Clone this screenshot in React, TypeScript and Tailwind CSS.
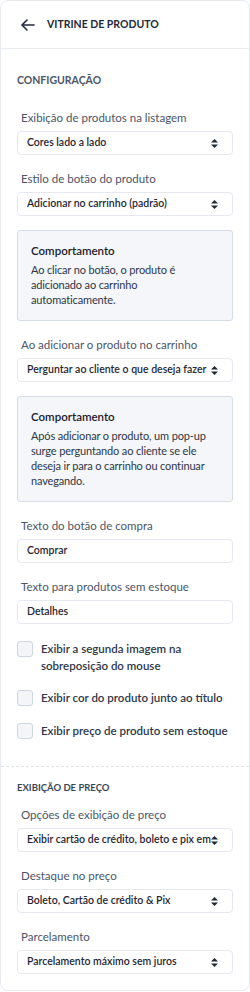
import React from "react";

const font = { fontFamily: '"Segoe UI", Lato, "Liberation Sans", sans-serif' };

function SortIcon() {
  return (
    <svg width="7" height="9" viewBox="0 0 7 9" className="shrink-0 text-[#1f2937]">
      <path d="M3.5 0 L7 3.6 H0 Z" fill="currentColor" />
      <path d="M3.5 9 L7 5.4 H0 Z" fill="currentColor" />
    </svg>
  );
}

function Label({ children, first }: { children: React.ReactNode; first?: boolean }) {
  return (
    <div className={`${first ? "" : "mt-[16px]"} mb-[5px] pl-1 text-[11.5px] leading-[16px] text-[#4a5568]`}>
      {children}
    </div>
  );
}

function Select({ value }: { value: string }) {
  return (
    <div className="flex h-[24px] items-center justify-between rounded-[4px] border border-[#e5e9ef] bg-white pl-[9px] pr-[14px]">
      <span className="overflow-hidden whitespace-nowrap pr-[6px] text-[10.5px] font-semibold text-[#1f2633]">{value}</span>
      <SortIcon />
    </div>
  );
}

function Input({ value }: { value: string }) {
  return (
    <div className="flex h-[24px] items-center rounded-[4px] border border-[#e5e9ef] bg-white pl-[9px]">
      <span className="text-[10.5px] font-semibold text-[#1f2633]">{value}</span>
    </div>
  );
}

function InfoBox({ lines }: { lines: string[] }) {
  return (
    <div className="mt-[14px] overflow-hidden rounded-[3px] border border-[#d6dde7] bg-[#f4f6fa] pb-[13px] pl-[13px] pr-1 pt-[12px]">
      <div className="text-[11.5px] font-semibold leading-[16px] text-[#1a202c]">Comportamento</div>
      <div className="mt-[3px] text-[11px] leading-[15px] tracking-[-0.15px] text-[#2d3748]">
        {lines.map((l) => (
          <div key={l} className="whitespace-nowrap">{l}</div>
        ))}
      </div>
    </div>
  );
}

function Check({ lines, className }: { lines: string[]; className?: string }) {
  return (
    <div className={`flex items-start gap-[8px] ${className ?? ""}`}>
      <div className="mt-[1px] h-[16px] w-[16px] shrink-0 rounded-[3px] border border-[#cfd6df] bg-[#f3f5f9]" />
      <div className="text-[11.5px] font-semibold leading-[17px] text-[#2d3748]">
        {lines.map((l) => (
          <div key={l} className="whitespace-nowrap">{l}</div>
        ))}
      </div>
    </div>
  );
}

export default function App() {
  return (
    <div className="h-[992px] w-[250px] bg-white" style={font}>
      <div className="h-[991px] overflow-hidden rounded-[8px] border border-[#e6eaee] bg-white">
        <div className="flex h-[48px] items-center gap-[12px] border-b border-[#e9edf1] pl-[20px]">
          <svg width="14" height="12" viewBox="0 0 14 12" fill="none" stroke="#1e293b" strokeWidth="1.6" strokeLinecap="round" strokeLinejoin="round">
            <path d="M13 6 H1.5" />
            <path d="M6 1 L1 6 L6 11" />
          </svg>
          <span className="text-[10.5px] font-bold uppercase text-[#1e293b]">Vitrine de produto</span>
        </div>

        <div className="px-[16px] pt-[24px]">
          <div className="mb-[23px] text-[10.5px] font-bold leading-[14px] text-[#4a5568]">CONFIGURAÇÃO</div>

          <Label first>Exibição de produtos na listagem</Label>
          <Select value="Cores lado a lado" />

          <Label>Estilo de botão do produto</Label>
          <Select value="Adicionar no carrinho (padrão)" />

          <InfoBox lines={["Ao clicar no botão, o produto é", "adicionado ao carrinho", "automaticamente."]} />

          <div className="h-[16px]" />
          <Label first>Ao adicionar o produto no carrinho</Label>
          <Select value="Perguntar ao cliente o que deseja fazer" />

          <InfoBox
            lines={[
              "Após adicionar o produto, um pop-up",
              "surge perguntando ao cliente se ele",
              "deseja ir para o carrinho ou continuar",
              "navegando.",
            ]}
          />

          <div className="h-[16px]" />
          <Label first>Texto do botão de compra</Label>
          <Input value="Comprar" />

          <Label>Texto para produtos sem estoque</Label>
          <Input value="Detalhes" />

          <Check className="mt-[16px]" lines={["Exibir a segunda imagem na", "sobreposição do mouse"]} />
          <Check className="mt-[15px]" lines={["Exibir cor do produto junto ao título"]} />
          <Check className="mt-[16px]" lines={["Exibir preço de produto sem estoque"]} />
        </div>

        <div className="mt-[27px] border-t border-dashed border-[#dfe3e8]" />

        <div className="px-[16px] pt-[14px]">
          <div className="mb-[13px] text-[9.5px] font-bold leading-[13px] text-[#3c4658]">EXIBIÇÃO DE PREÇO</div>

          <Label first>Opções de exibição de preço</Label>
          <Select value="Exibir cartão de crédito, boleto e pix em até" />

          <Label>Destaque no preço</Label>
          <Select value="Boleto, Cartão de crédito & Pix" />

          <Label>Parcelamento</Label>
          <Select value="Parcelamento máximo sem juros" />
        </div>
      </div>
    </div>
  );
}
